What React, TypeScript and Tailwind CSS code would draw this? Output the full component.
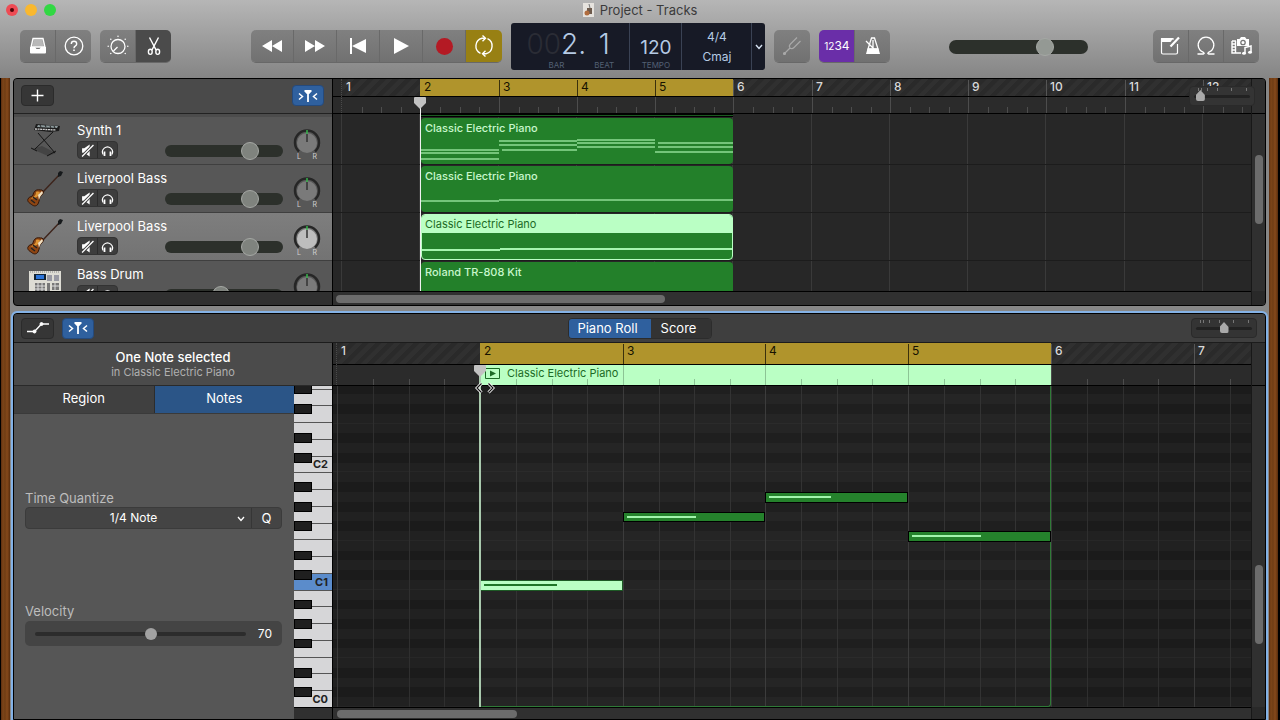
import React, { useState } from 'react';

type Instrument = 'synth' | 'bass' | 'drums';

interface ClipNote {
  from: number;
  to: number;
  y: number;
}

interface Track {
  id: number;
  name: string;
  instrument: Instrument;
  volume: number;
  clip: string;
  notes: ClipNote[];
}

interface RollNote {
  bar: number;
  semitone: number;
  velocity: number;
}

const TRACK_BAR = 78.25;
const ROLL_BAR = 142.75;
const OCTAVE = 117.25;
const CYCLE = { start: 2, end: 6 };

const BASS_NOTES: ClipNote[] = [
  { from: 0, to: 25, y: 34 },
  { from: 25, to: 100, y: 33 },
];

const TRACKS: Track[] = [
  {
    id: 1,
    name: 'Synth 1',
    instrument: 'synth',
    volume: 76,
    clip: 'Classic Electric Piano',
    notes: [
      { from: 0, to: 25, y: 31 },
      { from: 0, to: 25, y: 34 },
      { from: 0, to: 25, y: 40 },
      { from: 25, to: 50, y: 22 },
      { from: 25, to: 50, y: 26 },
      { from: 26, to: 50, y: 31 },
      { from: 50, to: 75, y: 21 },
      { from: 50, to: 75, y: 24 },
      { from: 50, to: 75, y: 28 },
      { from: 76, to: 100, y: 24 },
      { from: 76, to: 100, y: 28 },
      { from: 75, to: 100, y: 33 },
    ],
  },
  { id: 2, name: 'Liverpool Bass', instrument: 'bass', volume: 76, clip: 'Classic Electric Piano', notes: BASS_NOTES },
  { id: 3, name: 'Liverpool Bass', instrument: 'bass', volume: 76, clip: 'Classic Electric Piano', notes: BASS_NOTES },
  { id: 4, name: 'Bass Drum', instrument: 'drums', volume: 47, clip: 'Roland TR-808 Kit', notes: [] },
];

const ROLL_NOTES: RollNote[] = [
  { bar: 2, semitone: 12, velocity: 55 },
  { bar: 3, semitone: 19, velocity: 52 },
  { bar: 4, semitone: 21, velocity: 47 },
  { bar: 5, semitone: 17, velocity: 52 },
];

const BLACK = [1, 3, 6, 8, 10];
const HATCH =
  'bg-[repeating-linear-gradient(135deg,#2a2a2a_0px,#2a2a2a_4px,#303030_5px,#303030_9px)]';

const barX = (bar: number, size: number) => Math.round((bar - 1) * size);
const rowY = (semitone: number) => Math.round((semitone * OCTAVE) / 12);
const keyY = (key: number) => Math.round((key * OCTAVE) / 7);
const inCycle = (bar: number) => bar >= CYCLE.start && bar < CYCLE.end;
const range = (n: number) => Array.from({ length: n }, (_, i) => i);

const InstrumentIcon: React.FC<{ kind: Instrument }> = ({ kind }) => {
  if (kind === 'synth') {
    return (
      <svg viewBox="0 0 38 38" className="h-[38px] w-[38px]">
        <path d="M6 27l10-3 14 7-8 3z" fill="#444" />
        <path d="M12 11l17 20M27 10L9 27M5 26l6 3M21 34l9-5" stroke="#141414" strokeWidth="1" fill="none" />
        <path d="M10 2l24 2-1 5-9 1-16-2z" fill="#1c1c1c" />
        <path d="M12 3l20 1-1 2-20-1z" fill="#8d9a9c" />
        <path d="M9 7l21 1" stroke="#d0d0d0" strokeWidth="1.300" strokeDasharray="2 .6" />
        <path d="M14 3l1 2M19 3l1 2M24 4l1 2M28 4l1 2" stroke="#222" />
      </svg>
    );
  }
  if (kind === 'bass') {
    return (
      <svg viewBox="0 0 38 38" className="h-[38px] w-[38px]">
        <path d="M16 23L34 4" stroke="#3d241b" strokeWidth="1.400" />
        <path d="M32 3l2-2 3 1-2 4-3 1z" fill="#16191b" />
        <path
          d="M9 21c2-2 5-1 7-1l1 1c1 1 0 3-2 5-2 1-1 4-3 8-2 3-5 2-7 0-2-1-4-3-3-5 1-3 5-2 5-4 0-1 1-3 2-4z"
          fill="#8d4513"
          stroke="#35180a"
        />
        <path d="M10 22c2-1 3 0 4 0-1 2-1 3-3 5-2 1-4 1-6 2 2-3 5-2 5-7z" fill="#dd9433" />
        <path d="M12 25l4-4 1 2-3 4-1 3z" fill="#f0dfc0" />
        <path d="M7 27l4 3M5 30l4 3" stroke="#222" strokeWidth="1.300" />
      </svg>
    );
  }
  return (
    <svg viewBox="0 0 38 38" className="h-[38px] w-[38px]">
      <path d="M3 5h32v32H3z" fill="#dddcd4" />
      <path d="M8 8h12v6H8z" fill="#123" />
      <path d="M10 9h8v4h-8z" fill="#2c74d8" />
      <path d="M21 9h5v6h-5zM28 9h5v6h-5z" fill="#9899a3" />
      <path d="M9 17h10v13H9zM21 17h3v9h-3zM26 17h7v7h-7z" fill="#777" />
      <path d="M9 20h10M9 23h10M9 27h10M12 17v13M16 17v13M26 20h7M29 17v7" stroke="#ddd" />
      <path d="M4 6h30" stroke="#888" strokeDasharray="1 1" />
    </svg>
  );
};

const MuteIcon = () => (
  <svg viewBox="0 0 12 12" className="h-[13px] w-[13px]">
    <path d="M1 4h2l5-3.500v11L3 8H1z" fill="#fff" />
    <path d="M1 11.500L11.500 1" stroke="#3d3d3d" strokeWidth="3" />
    <path d="M1 11.500L11.500 1" stroke="#fff" strokeWidth="1.200" />
  </svg>
);

const PhonesIcon = () => (
  <svg viewBox="0 0 13 13" className="h-[13px] w-[13px]" fill="none" stroke="#fff">
    <path d="M2.200 10.500A5 5 0 1 1 10.800 10.500" strokeWidth="1.200" />
    <path d="M3.500 7.500v4.500M9.500 7.500v4.500" strokeWidth="1.800" />
  </svg>
);

const CatchIcon = () => (
  <svg viewBox="0 0 22 14" className="h-3.5 w-[22px]" fill="none" stroke="#fff" strokeWidth="1.500">
    <path d="M2 4.500l3.500 3L2 10.500M20 4.500l-3.500 3 3.500 3" />
    <path d="M7.500 1h7v1.500L12.200 5h-2.400L7.500 2.500z" fill="#fff" stroke="none" />
    <path d="M11 4v9" strokeWidth="1.800" />
  </svg>
);

const PanKnob: React.FC<{ name: string; selected: boolean }> = ({ name, selected }) => (
  <div role="img" aria-label={`${name} pan`} className="flex w-[28px] flex-col items-center">
    <svg viewBox="0 0 28 28" className="h-7 w-7">
      <path d="M6 22.500A12 12 0 1 1 22 22.500" fill="none" stroke="#262626" strokeWidth="2.500" />
      <circle cx="14" cy="14" r="10" fill={selected ? '#bdbdbd' : '#7a7a7a'} />
      <path d="M14 1v4" stroke="#35b54a" strokeWidth="1.500" />
      <path d="M14 5v8" stroke="#333" strokeWidth="1.500" />
    </svg>
    <div className="-mt-1 flex w-5 justify-between text-[7px] leading-[8px] text-[#d0d0d0]">
      <span>L</span>
      <span>R</span>
    </div>
  </div>
);

const LevelSlider: React.FC<{ label: string; value: number; className: string }> = ({ label, value, className }) => (
  <input
    type="range"
    aria-label={label}
    defaultValue={value}
    className={`h-[18px] flex-none appearance-none bg-transparent [&::-webkit-slider-runnable-track]:rounded-full [&::-webkit-slider-runnable-track]:bg-[#2c302b] [&::-webkit-slider-thumb]:h-[18px] [&::-webkit-slider-thumb]:w-[18px] [&::-webkit-slider-thumb]:appearance-none [&::-webkit-slider-thumb]:rounded-full [&::-webkit-slider-thumb]:border [&::-webkit-slider-thumb]:border-[#a5a8a4] ${className}`}
  />
);

const ZoomSlider: React.FC<{ label: string; value: number }> = ({ label, value }) => (
  <div className="flex h-[20px] w-[66px] flex-none flex-col items-center rounded-[4px] border border-[#2a2a2a] bg-[#343434]">
    <svg viewBox="0 0 50 4" className="h-1 w-[50px] flex-none" stroke="#777">
      <path d="M1.500 1v3M4.500 1v3M10.500 1v3M20.500 1v3M34.500 1v3M49.500 1v3" />
    </svg>
    <input
      type="range"
      aria-label={label}
      defaultValue={value}
      className="h-[11px] w-[56px] appearance-none bg-transparent [&::-webkit-slider-runnable-track]:h-[3px] [&::-webkit-slider-runnable-track]:rounded-full [&::-webkit-slider-runnable-track]:bg-[#222] [&::-webkit-slider-thumb]:mt-[-5px] [&::-webkit-slider-thumb]:h-[11px] [&::-webkit-slider-thumb]:w-[9px] [&::-webkit-slider-thumb]:appearance-none [&::-webkit-slider-thumb]:rounded-[2px] [&::-webkit-slider-thumb]:bg-[#a9a9a9] [&::-webkit-slider-thumb]:[clip-path:polygon(50%_0,100%_45%,100%_100%,0_100%,0_45%)]"
    />
  </div>
);

const ToolButton: React.FC<{ label: string; className?: string; children: React.ReactNode }> = ({
  label,
  className = 'flex-1 bg-linear-to-b from-[#808080] to-[#717171]',
  children,
}) => (
  <button
    aria-label={label}
    className={`flex h-full items-center justify-center border-r border-[#696969] last:border-r-0 ${className}`}
  >
    {children}
  </button>
);

const GROUP = 'flex h-[33px] flex-none overflow-hidden rounded-[5px] border-b border-[#686868]';

const Toolbar = () => (
  <header className="flex-none bg-linear-to-b from-[#b6b6b6] to-[#858585]">
    <div className="relative flex h-[19px] items-center justify-center gap-1.5">
      <div className="absolute left-[6px] flex gap-[7px]">
        <button aria-label="Close" className="flex h-3 w-3 items-center justify-center rounded-full bg-[#ee4b54]">
          <span className="h-1 w-1 rounded-full bg-[#4c0508]" />
        </button>
        <button aria-label="Minimize" className="h-3 w-3 rounded-full bg-[#f9b82f]" />
        <button aria-label="Zoom" className="h-3 w-3 rounded-full bg-[#31d843]" />
      </div>
      <svg viewBox="0 0 11 14" className="h-3.5 w-[11px]">
        <path d="M0 0h11v14H0z" fill="#e6e3de" />
        <path d="M4 5h5v6H4z" fill="#6d5a4c" />
        <path d="M6 1l1 4" stroke="#777" />
        <circle cx="4" cy="10" r="2.500" fill="#b06c3e" />
      </svg>
      <h1 className="text-[13px] leading-[18px] text-[#3b3b3b]">Project - Tracks</h1>
    </div>

    <div className="flex h-[59px] items-center pr-[21px] pb-1 pl-5">
      <div className="flex gap-[9px]">
        <div className={`${GROUP} w-[71px]`}>
          <ToolButton label="Library">
            <svg viewBox="0 0 20 20" className="h-5 w-5">
              <path d="M5 2.500h10l2 8.500H3z" fill="#a9a9a9" stroke="#fff" strokeWidth="1.300" />
              <path d="M6 5h8M5.500 7h9M5 9h10" stroke="#ddd" strokeWidth=".6" />
              <path d="M2 11h5l1.500 2h3L13 11h5v5.500q0 1-1 1H3q-1 0-1-1z" fill="#fff" />
            </svg>
          </ToolButton>
          <ToolButton label="Quick Help">
            <svg viewBox="0 0 20 20" className="h-5 w-5" fill="none" stroke="#fff">
              <circle cx="10" cy="10" r="8.800" strokeWidth="1.300" />
              <path d="M7.300 8q0-2.700 2.700-2.700T12.700 8q0 1.300-1.500 2.200-1.200.7-1.200 2.100" strokeWidth="1.400" />
              <path d="M10 13.500v1.600" strokeWidth="1.600" />
            </svg>
          </ToolButton>
        </div>
        <div className={`${GROUP} w-[71px]`}>
          <ToolButton label="Smart Controls">
            <svg viewBox="0 0 22 22" className="h-[22px] w-[22px]" fill="none" stroke="#fff">
              <circle cx="11" cy="11.500" r="7" strokeWidth="1.300" />
              <path d="M10.500 12L6.500 16" strokeWidth="1.300" />
              <path
                d="M11 1.200v.01M3.800 4.200v.01M18.200 4.200v.01M1.200 11.200v.01M20.800 11.200v.01M3.800 18.500v.01M18.200 18.500v.01"
                strokeWidth="1.500"
                strokeLinecap="round"
              />
            </svg>
          </ToolButton>
          <ToolButton label="Editors" className="flex-1 bg-[#4b4b4b]">
            <svg viewBox="0 0 16 20" className="h-5 w-4" fill="none" stroke="#fff" strokeWidth="1.400">
              <path d="M3.500 1.500l6.500 12.300M12.500 1.500L6 13.800" />
              <ellipse cx="4.300" cy="15.800" rx="1.900" ry="2.600" />
              <ellipse cx="11.700" cy="15.800" rx="1.900" ry="2.600" />
            </svg>
          </ToolButton>
        </div>
      </div>

      <div className="grow-[80]" />

      <div className="flex items-center gap-[9px]">
        <div className={`${GROUP} w-[251px]`}>
          <ToolButton label="Rewind">
            <svg viewBox="0 0 22 14" className="h-3.5 w-[22px]" fill="#fff">
              <path d="M11 1v12L1 7zM21 1v12L11 7z" />
            </svg>
          </ToolButton>
          <ToolButton label="Forward">
            <svg viewBox="0 0 22 14" className="h-3.5 w-[22px]" fill="#fff">
              <path d="M1 1v12l10-6zM11 1v12l10-6z" />
            </svg>
          </ToolButton>
          <ToolButton label="Go to Beginning">
            <svg viewBox="0 0 18 16" className="h-4 w-[18px]" fill="#fff">
              <path d="M1 0h2v16H1zM17 1v14L3 8z" />
            </svg>
          </ToolButton>
          <ToolButton label="Play">
            <svg viewBox="0 0 16 16" className="h-4 w-4" fill="#fff">
              <path d="M1 0v16l15-8z" />
            </svg>
          </ToolButton>
          <ToolButton label="Record">
            <span className="h-[17px] w-[17px] rounded-full bg-[#b41a24]" />
          </ToolButton>
          <ToolButton label="Cycle" className="w-9 flex-none bg-[#988013]">
            <svg viewBox="0 0 22 22" className="h-[22px] w-[22px]" fill="none" stroke="#fff" strokeWidth="1.400">
              <path d="M7.500 18.300A8 8 0 0 1 9 3.300h3M14.500 3.700A8 8 0 0 1 13 18.700h-3" />
              <path d="M9.500 .5l3 2.800-3 2.900M12.500 15.800l-3 2.900 3 2.800" />
            </svg>
          </ToolButton>
        </div>

        <div className="flex h-[47px] w-[254px] flex-none rounded-[3px] bg-[#171a26] text-[#b5cae4]">
          <div className="flex w-[119px] justify-center gap-2 border-r border-[#3a4254]">
            <div className="flex flex-col items-center">
              <span className="h-[38px] text-[28px] leading-[43px] font-light">
                <span className="text-[#2a2c35]">00</span>2.
              </span>
              <span className="text-[8px] leading-[8px] text-[#536074]">BAR</span>
            </div>
            <div className="flex flex-col items-center">
              <span className="h-[38px] text-[28px] leading-[43px] font-light">1</span>
              <span className="text-[8px] leading-[8px] text-[#536074]">BEAT</span>
            </div>
          </div>
          <div className="flex w-[52px] flex-col items-center border-r border-[#3a4254]">
            <span className="h-[38px] text-[19px] leading-[49px]">120</span>
            <span className="text-[8px] leading-[8px] text-[#536074]">TEMPO</span>
          </div>
          <div className="flex w-[70px] flex-col items-center border-r border-[#3a4254] pt-1 text-[12px] leading-[20px]">
            <span>4/4</span>
            <span>Cmaj</span>
          </div>
          <button aria-label="Display mode" className="flex w-[13px] items-center justify-center">
            <svg viewBox="0 0 8 6" className="h-1.5 w-2" fill="none" stroke="#d6e2f2" strokeWidth="1.400">
              <path d="M1 1l3 3.500L7 1" />
            </svg>
          </button>
        </div>

        <div className={`${GROUP} w-[36px]`}>
          <ToolButton label="Tuner">
            <svg viewBox="0 0 20 20" className="h-5 w-5" fill="none" stroke="#a8a8a8" strokeWidth="1.200">
              <path d="M2.500 17.500L8 12M8 12q-1.500-2 .5-4L15 1.500M8 12q2 1.500 4-.5L18.500 5" />
              <circle cx="2.500" cy="17.500" r="1" fill="#a8a8a8" />
            </svg>
          </ToolButton>
        </div>
        <div className={`${GROUP} w-[71px]`}>
          <ToolButton label="Count In" className="flex-1 bg-[#6a2ea8] text-[12px] text-white">
            <span className="text-[10px]">12</span>34
          </ToolButton>
          <ToolButton label="Metronome">
            <svg viewBox="0 0 18 18" className="h-[18px] w-[18px]">
              <path d="M7.500 1h3l3.500 11H4z" fill="none" stroke="#fff" strokeWidth="1.300" />
              <path d="M3.500 11.500h11L16 17H2z" fill="#fff" />
              <path d="M2 4l8 8M9 3v8" stroke="#fff" strokeWidth="1.300" />
            </svg>
          </ToolButton>
        </div>
      </div>

      <div className="grow-[58]" />

      <LevelSlider
        label="Master Volume"
        value={72}
        className="w-[139px] [&::-webkit-slider-runnable-track]:h-[14px] [&::-webkit-slider-thumb]:mt-[-2px] [&::-webkit-slider-thumb]:bg-[#949994]"
      />

      <div className="grow-[65]" />

      <div className={`${GROUP} w-[106px]`}>
        <ToolButton label="Note Pad">
          <svg viewBox="0 0 20 20" className="h-5 w-5" fill="none" stroke="#fff">
            <path d="M17.500 8v8.500q0 1.500-1.500 1.500H3q-1.500 0-1.500-1.500V3H14" strokeWidth="1.200" />
            <path d="M1 2h12.500l-3 4H1z" fill="#fff" stroke="none" />
            <path d="M10.500 10.500L19 1.500" strokeWidth="2.200" />
          </svg>
        </ToolButton>
        <ToolButton label="Loop Browser">
          <svg viewBox="0 0 20 20" className="h-5 w-5" fill="none" stroke="#fff" strokeWidth="1.300">
            <path d="M1.500 18H7.500q1.500-.5 0-1.600A7.800 7.800 0 1 1 12.500 16.400q-1.500 1.100 0 1.600h6" />
          </svg>
        </ToolButton>
        <ToolButton label="Media Browser">
          <svg viewBox="0 0 22 20" className="h-5 w-[22px]">
            <path d="M1 5h4M1 5v12h9M4.500 5v12M1 8h3M1 11h3M1 14h3" fill="none" stroke="#fff" strokeWidth="1.400" />
            <path d="M6 3h2.500L10 1h4l1.500 2H18v7H6z" fill="#fff" />
            <circle cx="12" cy="6.500" r="2.200" fill="#fff" stroke="#777" strokeWidth="1.300" />
            <path d="M14 17v-5.500l6-1.500v6" fill="none" stroke="#fff" strokeWidth="1.500" />
            <ellipse cx="13" cy="17.300" rx="1.900" ry="1.500" fill="#fff" />
            <ellipse cx="19" cy="16.300" rx="1.900" ry="1.500" fill="#fff" />
          </svg>
        </ToolButton>
      </div>
    </div>
  </header>
);

interface RulerProps {
  bars: number;
  size: number;
  lead: string;
  top: string;
  bottom: string;
  region?: string;
}

const Ruler: React.FC<RulerProps> = ({ bars, size, lead, top, bottom, region }) => (
  <div className="relative flex flex-none overflow-hidden border-b border-black bg-[#2b2b2b]">
    <div className={`flex-none border-r border-dotted border-[#4a4a4a] ${lead}`}>
      <div className={`${top} border-b border-black bg-[#2a2a2a]`} />
    </div>
    {range(bars).map((i) => {
      const bar = i + 1;
      const cycle = inCycle(bar);
      const first = bar === 1;
      const start = bar === CYCLE.start;
      const lit = cycle && !!region;
      return (
        <div key={bar} className="flex-none" style={{ width: barX(bar + 1, size) - barX(bar, size) }}>
          <div className={`${top} flex border-b border-black pt-px ${cycle ? 'bg-[#b0942c]' : HATCH}`}>
            <div
              className={`pl-[3px] text-[12px] leading-[13px] ${
                first || start
                  ? 'border-l border-transparent'
                  : cycle
                    ? 'border-l border-[#3a300c]'
                    : 'border-l border-[#555]'
              } ${cycle ? 'text-[#171200]' : 'font-medium text-[#d9d9d9]'}`}
            >
              {bar}
            </div>
          </div>
          <div className={`${bottom} flex items-end ${lit ? 'bg-[#baffc4]' : ''}`}>
            {range(4).map((beat) => (
              <div
                key={beat}
                className={`flex-1 border-l ${beat === 0 ? 'h-full' : 'h-1.5'} ${
                  beat === 0 && (first || start) ? 'border-transparent' : lit ? 'border-[#8cc495]' : 'border-[#4d4d4d]'
                }`}
              />
            ))}
          </div>
        </div>
      );
    })}
    {region && (
      <div className="absolute bottom-px left-[152px] flex h-[21px] items-center gap-[7px] text-[11px] text-[#1c6b26]">
        <svg viewBox="0 0 15 11" className="h-[11px] w-[15px]">
          <path d="M.5 .5h14v10H.5z" fill="none" stroke="#1c6b26" />
          <path d="M5 2.500v6l6-3z" fill="#1c6b26" />
        </svg>
        {region}
      </div>
    )}
  </div>
);

const PlayheadMarker: React.FC<{ className: string }> = ({ className }) => (
  <svg viewBox="0 0 12 12" className={`pointer-events-none absolute z-10 h-3 w-3 ${className}`}>
    <path d="M1 0h10q1 0 1 1v5l-6 6-6-6V1q0-1 1-1z" fill="#c2c2c2" />
  </svg>
);

const TrackHeader: React.FC<{ track: Track; selected: boolean; onSelect: () => void }> = ({
  track,
  selected,
  onSelect,
}) => (
  <li
    onClick={onSelect}
    className={`flex h-12 flex-none items-start border-b border-[#3f3f3f] pl-3 ${
      selected ? 'bg-linear-to-b from-[#7e7e7e] to-[#737373]' : 'bg-[#575757]'
    }`}
  >
    <div className="w-[51px] flex-none pt-[5px]">
      <InstrumentIcon kind={track.instrument} />
    </div>
    <div className="w-[88px] flex-none pt-1">
      <div className="text-[13px] leading-[18px] whitespace-nowrap text-white">{track.name}</div>
      <div className="mt-[2px] flex h-[18px] w-[41px] overflow-hidden rounded-[4px] border border-[#333] bg-[#3d3d3d]">
        <button aria-label={`Mute ${track.name}`} className="flex flex-1 items-center justify-center border-r border-[#2c2c2c]">
          <MuteIcon />
        </button>
        <button aria-label={`Solo ${track.name}`} className="flex flex-1 items-center justify-center">
          <PhonesIcon />
        </button>
      </div>
    </div>
    <div className="flex flex-1 items-start justify-between pr-[11px]">
      <LevelSlider
        label={`${track.name} volume`}
        value={track.volume}
        className="mt-[25px] w-[118px] [&::-webkit-slider-runnable-track]:h-3 [&::-webkit-slider-thumb]:mt-[-3px] [&::-webkit-slider-thumb]:bg-[#7f837e]"
      />
      <div className="pt-3">
        <PanKnob name={track.name} selected={selected} />
      </div>
    </div>
  </li>
);

const Clip: React.FC<{ track: Track; selected: boolean }> = ({ track, selected }) => (
  <div
    className={`relative h-[46px] overflow-hidden rounded-[4px] bg-[#23802a] ${
      selected ? 'border border-[#baffc4]' : ''
    }`}
    style={{ width: barX(CYCLE.end, TRACK_BAR) - barX(CYCLE.start, TRACK_BAR) - 1 }}
  >
    <div
      className={`text-[11px] ${
        selected
          ? 'h-[18px] bg-[#baffc4] pl-[3px] leading-[18px] text-[#1c6b26]'
          : 'h-5 pl-1 leading-5 font-medium text-[#c9f7cd]'
      }`}
    >
      {track.clip}
    </div>
    {track.notes.map((n, i) => (
      <div
        key={i}
        className={`absolute h-[2px] ${selected ? 'bg-[#a5f5ae]' : 'bg-[#74c57a]'}`}
        style={{ left: `${n.from}%`, width: `${n.to - n.from}%`, top: n.y }}
      />
    ))}
  </div>
);

const TracksPanel = () => {
  const [selected, setSelected] = useState(3);

  return (
    <section className="flex h-[228px] flex-none overflow-hidden rounded-[4px] border border-black bg-[#303030]">
      <div className="flex w-[319px] flex-none flex-col border-r border-black">
        <div className="flex h-[35px] flex-none items-center justify-between border-b border-[#222] bg-[#4a4a4a] pr-[8px] pb-px pl-[7px]">
          <button
            aria-label="Add Track"
            className="flex h-[21px] w-[33px] items-center justify-center rounded-[4px] border border-[#2b2b2b] bg-[#363636]"
          >
            <svg viewBox="0 0 13 13" className="h-[13px] w-[13px]" stroke="#fff" strokeWidth="1.400">
              <path d="M6.500 .5v12M.5 6.500h12" />
            </svg>
          </button>
          <button
            aria-label="Catch Playhead"
            className="flex h-[21px] w-8 items-center justify-center rounded-[4px] border border-[#254a7c] bg-[#2f609e]"
          >
            <CatchIcon />
          </button>
        </div>
        <ul className="flex flex-1 flex-col overflow-hidden border-t-3 border-[#4c4c4c]">
          {TRACKS.map((t) => (
            <TrackHeader key={t.id} track={t} selected={t.id === selected} onSelect={() => setSelected(t.id)} />
          ))}
        </ul>
        <div className="h-[14px] flex-none border-t border-black" />
      </div>

      <div className="relative flex min-w-0 flex-1 flex-col">
        <Ruler bars={12} size={TRACK_BAR} lead="w-[9px]" top="h-[18px]" bottom="h-4" />
        <div className="relative flex-1 overflow-hidden bg-[#272727]">
          <div className="absolute inset-0 flex pl-2">
            {range(12).map((i) => (
              <div
                key={i}
                className="flex-none border-l border-[#3a3a3a]"
                style={{ width: barX(i + 2, TRACK_BAR) - barX(i + 1, TRACK_BAR) }}
              />
            ))}
          </div>
          <div className="relative flex flex-col pl-[88px]">
            <div
              className="h-[3px] border-y border-black bg-[#1b5a21]"
              style={{ width: barX(CYCLE.end, TRACK_BAR) - barX(CYCLE.start, TRACK_BAR) - 1 }}
            />
            {TRACKS.map((t) => (
              <div key={t.id} className="-ml-[88px] h-12 border-b border-[#1c1c1c] pt-px pl-[88px]">
                <Clip track={t} selected={t.id === selected} />
              </div>
            ))}
          </div>
        </div>
        <div className="flex h-[14px] flex-none items-center border-t border-black pl-[3px]">
          <div className="h-2 w-[329px] rounded-full bg-[#6c6c6c]" />
        </div>
        <div className="pointer-events-none absolute top-6 bottom-[14px] left-[87px] w-px bg-[#f0f0f0]" />
        <PlayheadMarker className="top-[18px] left-[81px]" />
      </div>

      <div className="relative flex w-[14px] flex-none flex-col border-l border-[#181818] bg-[#303030]">
        <div className="h-[35px] flex-none border-b border-black" />
        <div className="flex flex-1 justify-center pt-[41px]">
          <div className="h-[69px] w-2 rounded-full bg-[#6c6c6c]" />
        </div>
        <div className="h-[14px] bg-[#292929]" />
        <div className="absolute top-[7px] right-[10px] z-10">
          <ZoomSlider label="Tracks zoom" value={4} />
        </div>
      </div>
    </section>
  );
};

const Keyboard = () => (
  <div className="relative flex min-h-0 w-[38px] flex-1 flex-col-reverse overflow-hidden bg-[#1d1d1d]">
    {range(42).map((k) => {
      const octave = Math.floor(k / 7);
      const isC = k % 7 === 0;
      return (
        <div
          key={k}
          className={`flex flex-none items-center justify-end border-t border-[#555] pr-1 text-[11px] leading-[11px] font-bold text-[#222] ${
            k === 7 ? 'bg-[#5b8ccb]' : 'bg-[#d6d6d8]'
          }`}
          style={{ height: keyY(k + 1) - keyY(k) }}
        >
          {isC ? `C${octave}` : ''}
        </div>
      );
    })}
    {range(72)
      .filter((s) => BLACK.includes(s % 12))
      .map((s) => (
        <div
          key={s}
          className="absolute left-0 w-[18px] border border-black bg-[#1f1f1f]"
          style={{ bottom: rowY(s), height: rowY(s + 1) - rowY(s) }}
        />
      ))}
  </div>
);

const NoteGrid = () => {
  const left = barX(CYCLE.start, ROLL_BAR) + 4;
  const width = barX(CYCLE.end, ROLL_BAR) - barX(CYCLE.start, ROLL_BAR);

  return (
    <div className="relative flex-1 overflow-hidden bg-[#222]">
      <div className="absolute inset-0 flex flex-col-reverse">
        {range(72).map((s) => (
          <div
            key={s}
            className={`flex-none ${BLACK.includes(s % 12) ? 'bg-[#1b1b1b]' : 'bg-[#212121]'} ${
              s % 12 === 0 || s % 12 === 5 ? 'border-b border-[#272727]' : ''
            }`}
            style={{ height: rowY(s + 1) - rowY(s) }}
          />
        ))}
      </div>
      <div className="absolute inset-0 flex pl-1">
        {range(7).map((i) => (
          <div
            key={i}
            className="flex flex-none"
            style={{ width: barX(i + 2, ROLL_BAR) - barX(i + 1, ROLL_BAR) }}
          >
            {range(4).map((beat) => (
              <div
                key={beat}
                className={`flex-1 border-l ${beat === 0 ? 'border-[#393939]' : 'border-[#2f2f2f]'}`}
              />
            ))}
          </div>
        ))}
      </div>
      <div
        className="absolute inset-y-0 rounded-b-[3px] border-r border-b border-[#2f7a37] bg-white/2"
        style={{ left, width }}
      />
      {ROLL_NOTES.map((n) => {
        const selected = n.semitone === 12;
        return (
          <div
            key={n.bar}
            className={`absolute border ${selected ? 'border-[#1d5a25] bg-[#baffc4]' : 'border-black bg-[#25822c]'}`}
            style={{
              left: barX(n.bar, ROLL_BAR) + 4,
              width: barX(n.bar + 1, ROLL_BAR) - barX(n.bar, ROLL_BAR),
              bottom: rowY(n.semitone) - 1,
              height: rowY(n.semitone + 1) - rowY(n.semitone) + 1,
            }}
          >
            <div
              className={`mt-[3px] ml-[3px] h-[2px] ${selected ? 'bg-[#1f7527]' : 'bg-[#a3f5ad]'}`}
              style={{ width: `${n.velocity - 3}%` }}
            />
          </div>
        );
      })}
    </div>
  );
};

const EditorPanel = () => {
  const [tab, setTab] = useState('Notes');

  return (
    <section className="flex min-h-0 flex-1 flex-col overflow-hidden rounded-t-[4px] border border-black bg-[#303030] ring-2 ring-[#84b2e6]">
      <div className="relative flex h-[29px] flex-none items-center justify-between border-b border-[#1c1c1c] bg-[#3f3f3f] pr-[8px] pl-[7px]">
        <div className="flex gap-[8px]">
          <button
            aria-label="Show Automation"
            className="flex h-[21px] w-[33px] items-center justify-center rounded-[4px] border border-[#2b2b2b] bg-[#363636]"
          >
            <svg viewBox="0 0 22 14" className="h-3.5 w-[22px]" fill="#fff" stroke="#fff">
              <path d="M0 10.500h7.500L14.500 3H22" fill="none" strokeWidth="1.300" />
              <circle cx="7.500" cy="10.500" r="1.500" />
              <circle cx="14.500" cy="3" r="1.500" />
            </svg>
          </button>
          <button
            aria-label="Catch Playhead in Editor"
            className="flex h-[21px] w-8 items-center justify-center rounded-[4px] border border-[#254a7c] bg-[#2f609e]"
          >
            <CatchIcon />
          </button>
        </div>
        <div className="absolute inset-x-0 flex justify-center">
          <div className="flex h-[21px] w-[144px] overflow-hidden rounded-[4px] border border-[#2c2c2c] text-[13px] text-white">
            <button className="w-[82px] bg-[#2f609e] pr-1">Piano Roll</button>
            <button className="flex-1 bg-[#333] pr-1">Score</button>
          </div>
        </div>
        <div className="relative">
          <ZoomSlider label="Editor zoom" value={50} />
        </div>
      </div>

      <div className="flex min-h-0 flex-1">
        <div className="flex w-[319px] flex-none flex-col border-r border-black">
          <div className="flex h-[43px] flex-none flex-col items-center justify-center border-b border-[#2a2a2a] bg-[#4b4b4b]">
            <div className="text-[13px] leading-[15px] font-medium text-white">One Note selected</div>
            <div className="text-[11px] leading-[14px] text-[#b0b0b0]">in Classic Electric Piano</div>
          </div>
          <div className="flex min-h-0 flex-1">
            <div className="flex flex-1 flex-col bg-[#565656]">
              <div className="flex h-[28px] flex-none border-b border-[#3a3a3a] text-[13px] text-white">
                {['Region', 'Notes'].map((name) => (
                  <button
                    key={name}
                    onClick={() => setTab(name)}
                    className={`flex-1 border-r border-[#2c2c2c] pb-[2px] last:border-r-0 ${
                      tab === name ? 'bg-[#2b5587]' : 'bg-[#404040]'
                    }`}
                  >
                    {name}
                  </button>
                ))}
              </div>
              <div className="pt-[75px] pr-3 pl-[11px] text-[13px] text-[#bdbdbd]">
                <label htmlFor="quantize" className="block leading-[18px]">
                  Time Quantize
                </label>
                <div className="relative flex h-[22px] rounded-[4px] border border-[#3b3b3b] bg-[#444] text-white">
                  <select
                    id="quantize"
                    className="flex-1 appearance-none pr-2.5 text-[12px] leading-5 [text-align-last:center]"
                  >
                    <option>1/4 Note</option>
                    <option>1/8 Note</option>
                    <option>1/16 Note</option>
                  </select>
                  <svg
                    viewBox="0 0 8 6"
                    className="pointer-events-none absolute top-[8px] right-[36px] h-1.5 w-2"
                    fill="none"
                    stroke="#fff"
                    strokeWidth="1.300"
                  >
                    <path d="M1 1l3 3.500L7 1" />
                  </svg>
                  <button aria-label="Quantize" className="w-[30px] border-l border-[#363636] text-[13px] leading-5">
                    Q
                  </button>
                </div>
                <label htmlFor="velocity" className="mt-[73px] block leading-[18px]">
                  Velocity
                </label>
                <div className="mt-px flex h-[25px] items-center rounded-[5px] bg-[#444] px-[10px]">
                  <input
                    id="velocity"
                    type="range"
                    min={0}
                    max={127}
                    defaultValue={70}
                    className="h-3 w-[211px] appearance-none bg-transparent [&::-webkit-slider-runnable-track]:h-1 [&::-webkit-slider-runnable-track]:rounded-full [&::-webkit-slider-runnable-track]:bg-[#2c2c2c] [&::-webkit-slider-thumb]:mt-[-4px] [&::-webkit-slider-thumb]:h-3 [&::-webkit-slider-thumb]:w-3 [&::-webkit-slider-thumb]:appearance-none [&::-webkit-slider-thumb]:rounded-full [&::-webkit-slider-thumb]:bg-[#a2a2a2]"
                  />
                  <output htmlFor="velocity" className="flex-1 text-right text-[12px] text-white">
                    70
                  </output>
                </div>
              </div>
            </div>
            <div className="flex flex-col">
              <Keyboard />
              <div className="h-3 flex-none border-t border-black bg-[#303030]" />
            </div>
          </div>
        </div>

        <div className="relative flex min-w-0 flex-1 flex-col">
          <Ruler
            bars={7}
            size={ROLL_BAR}
            lead="w-[4px]"
            top="h-[22px]"
            bottom="h-5"
            region="Classic Electric Piano"
          />
          <NoteGrid />
          <div className="flex h-3 flex-none items-center border-t border-black pl-[4px]">
            <div className="h-2 w-[180px] rounded-full bg-[#6c6c6c]" />
          </div>
          <div className="pointer-events-none absolute top-[22px] bottom-3 left-[146px] w-[2px] bg-[#a9c9ad]" />
          <PlayheadMarker className="top-[22px] left-[141px]" />
          <svg viewBox="0 0 20 12" className="pointer-events-none absolute top-[39px] left-[142px] z-10 h-3 w-5" fill="none">
            <path d="M6.500 1.500L2 6l4.500 4.500M13.500 1.500L18 6l-4.500 4.500" stroke="#fff" strokeWidth="3" />
            <path d="M6.500 1.500L2 6l4.500 4.500M13.500 1.500L18 6l-4.500 4.500" stroke="#111" strokeWidth="1.200" />
          </svg>
        </div>

        <div className="flex w-[14px] flex-none flex-col border-l border-[#181818]">
          <div className="h-[43px] flex-none border-b border-black" />
          <div className="flex flex-1 items-end justify-center pb-[63px]">
            <div className="h-[79px] w-2 rounded-full bg-[#6c6c6c]" />
          </div>
          <div className="h-3 bg-[#292929]" />
        </div>
      </div>
    </section>
  );
};

const WOOD =
  'w-[9px] flex-none bg-[linear-gradient(90deg,#5a2d10_0px,#7d4518_2px,#6f3d15_4px,#85491b_6px,#6a3812_8px,#572c0e_9px)]';

const App = () => (
  <div className="flex h-screen min-w-[1100px] flex-col overflow-hidden bg-[#878787] font-['Inter','Liberation_Sans',sans-serif] select-none">
    <Toolbar />
    <div className="flex min-h-0 flex-1">
      <div className="w-px flex-none bg-black" />
      <div className={WOOD} />
      <main className="flex min-w-0 flex-1 flex-col gap-[7px] px-[3px]">
        <TracksPanel />
        <EditorPanel />
      </main>
      <div className={WOOD} />
      <div className="w-[2px] flex-none bg-black" />
    </div>
  </div>
);

export default App;
